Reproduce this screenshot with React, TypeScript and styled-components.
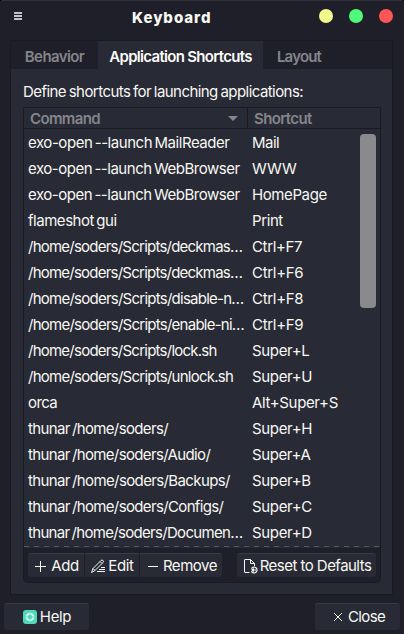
import React from "react";
import styled, { createGlobalStyle } from "styled-components";

const Global = createGlobalStyle`
  * { box-sizing: border-box; }
  html, body { margin: 0; background: #000; overflow: hidden; }
  body { font-family: Inter, "Liberation Sans", sans-serif; font-size: 15px; letter-spacing: -0.35px; color: #f8f8f2; }
`;

const Window = styled.div`
  width: 404px; height: 634px; display: flex; flex-direction: column;
  background: #1e1f29; border-top: 1px solid #30313a; border-radius: 3px 3px 0 0;
`;
const TitleBar = styled.header`
  height: 39px; flex: none; display: grid; grid-template-columns: 120px 1fr 120px;
  padding-bottom: 6px; align-items: center;
`;
const MenuIcon = styled.div`
  width: 8px; height: 8px; margin: -3px 0 0 14px; display: flex; flex-direction: column; justify-content: space-between;
  &::before, &::after, & > i { content: ""; height: 2px; background: #c4c4c6; display: block; }
`;
const Title = styled.h1`
  margin: 0; padding-left: 12px; font-size: 15px; font-weight: 800; letter-spacing: 0.95px; line-height: 20px;
`;
const Controls = styled.div`
  display: flex; justify-content: flex-end; gap: 16px; padding-right: 11px; margin-top: -4px;
`;
const Dot = styled.span<{ $color: string }>`
  width: 14px; height: 14px; border-radius: 50%; background: ${(p) => p.$color};
`;
const Notebook = styled.main`
  width: 383px; height: 555px; margin-left: 10px; flex: none; background: #282a36;
  border: 1px solid #191a22; display: flex; flex-direction: column;
`;
const Tabs = styled.nav`
  height: 28px; flex: none; display: flex; background: #1e1f29;
`;
const Tab = styled.div<{ $active?: boolean; $width: number; $tracking: number }>`
  width: ${(p) => p.$width}px; padding-top: 2px; line-height: 28px; height: 28px; text-align: center;
  white-space: nowrap; font-weight: 600; letter-spacing: ${(p) => p.$tracking}px;
  color: ${(p) => (p.$active ? "#fcfcf8" : "#85858a")};
  background: ${(p) => (p.$active ? "#282a36" : "transparent")};
`;
const Intro = styled.p`
  margin: 13px 0 5px 12px; height: 20px; line-height: 20px; white-space: nowrap; letter-spacing: -0.56px; word-spacing: -0.9px;
`;
const Table = styled.section`
  width: 358px; height: 476px; margin-left: 12px; border: 1px solid #191a22;
  border-radius: 0 0 5px 5px; display: flex; flex-direction: column; overflow: hidden;
`;
const Head = styled.div`
  height: 21px; flex: none; display: grid; grid-template-columns: 224px 1fr;
  border-bottom: 1px solid #191a22; color: #85858a; font-weight: 600; line-height: 21px; letter-spacing: -0.63px;
`;
const HeadCell = styled.div`
  display: flex; justify-content: space-between; align-items: center; padding: 0 9px 0 6px;
  border-right: 1px solid #191a22;
  &:last-child { border-right: 0; }
`;
const Body = styled.div`
  display: flex; flex: none; height: 417px; padding-top: 1px;
`;
const Rows = styled.div`width: 334px;`;
const Row = styled.div`
  height: 26px; line-height: 26px; display: grid; grid-template-columns: 224px 1fr; white-space: nowrap;
`;
const Cell = styled.span<{ $tracking?: number }>`
  padding: 0 0 0 4px; letter-spacing: ${(p) => p.$tracking ?? -0.35}px; word-spacing: -1.4px;
`;
const Scrollbar = styled.div`
  width: 16px; height: 174px; margin: 4px 0 0 2px; border-radius: 4px; background: #89898e;
`;
const Dashes = styled.div`
  height: 1px; flex: none;
  background: repeating-linear-gradient(90deg, #55565f 0 5px, transparent 5px 10px);
`;
const Toolbar = styled.div`
  flex: 1; display: flex; padding: 5px 4px 0; background: #1e1f29; border-top: 1px solid #282a36;
`;
const Button = styled.button<{ $width: number; $height?: number; $tracking?: number }>`
  width: ${(p) => p.$width}px; height: ${(p) => p.$height ?? 24}px; padding: 0; border: 0;
  border-top: 1px solid #393b45; border-radius: 3px; background: #282a36;
  color: #f8f8f2; font: inherit; line-height: 20px; letter-spacing: ${(p) => p.$tracking ?? -0.35}px;
  display: flex; align-items: center; justify-content: center; gap: 2px; white-space: nowrap;
  svg { flex: none; }
`;
const Group = styled.div`
  display: flex; gap: 1px;
  ${Button}:first-child { border-radius: 3px 0 0 3px; }
  ${Button}:nth-child(2) { border-radius: 0; }
  ${Button}:last-child { border-radius: 0 3px 3px 0; }
`;
const ResetSlot = styled.div`margin-left: 15px;`;
const Footer = styled.footer`
  display: flex; justify-content: space-between; padding: 8px 4px 0;
`;

const Icon = ({ children }: { children: React.ReactNode }) => (
  <svg width="16" height="16" viewBox="0 0 16 16" fill="none" stroke="#f8f8f2" strokeWidth="1">{children}</svg>
);

const rows: [string, number, string, number][] = [
  ["exo-open --launch MailReader", -0.45, "Mail", -0.5],
  ["exo-open --launch WebBrowser", -0.48, "WWW", -0.2],
  ["exo-open --launch WebBrowser", -0.48, "HomePage", -0.4],
  ["flameshot gui", -0.47, "Print", -0.4],
  ["/home/soders/Scripts/deckmas…", -0.77, "Ctrl+F7", -0.35],
  ["/home/soders/Scripts/deckmas…", -0.77, "Ctrl+F6", -0.3],
  ["/home/soders/Scripts/disable-n…", -0.75, "Ctrl+F8", -0.3],
  ["/home/soders/Scripts/enable-ni…", -0.75, "Ctrl+F9", -0.3],
  ["/home/soders/Scripts/lock.sh", -0.76, "Super+L", -0.35],
  ["/home/soders/Scripts/unlock.sh", -0.75, "Super+U", -0.35],
  ["orca", -0.6, "Alt+Super+S", -0.35],
  ["thunar /home/soders/", -0.64, "Super+H", -0.35],
  ["thunar /home/soders/Audio/", -0.64, "Super+A", -0.4],
  ["thunar /home/soders/Backups/", -0.62, "Super+B", -0.35],
  ["thunar /home/soders/Configs/", -0.64, "Super+C", -0.35],
  ["thunar /home/soders/Documen…", -0.69, "Super+D", -0.35],
];

export default function App() {
  return (
    <Window>
      <Global />
      <TitleBar>
        <MenuIcon><i /></MenuIcon>
        <Title>Keyboard</Title>
        <Controls><Dot $color="#f1fa8c" /><Dot $color="#50fa7b" /><Dot $color="#ff5555" /></Controls>
      </TitleBar>
      <Notebook>
        <Tabs>
          <Tab $width={87} $tracking={-0.6}>Behavior</Tab>
          <Tab $width={165} $tracking={-0.7} $active>Application Shortcuts</Tab>
          <Tab $width={72} $tracking={-0.8}>Layout</Tab>
        </Tabs>
        <Intro>Define shortcuts for launching applications:</Intro>
        <Table>
          <Head>
            <HeadCell>Command
              <svg width="10" height="5" viewBox="0 0 10 5"><path d="M0 0H10L5 5Z" fill="#85858a" /></svg>
            </HeadCell>
            <HeadCell>Shortcut</HeadCell>
          </Head>
          <Body>
            <Rows>
              {rows.map(([command, commandTracking, shortcut, shortcutTracking], i) => (
                <Row key={i}>
                  <Cell $tracking={commandTracking}>{command}</Cell>
                  <Cell $tracking={shortcutTracking}>{shortcut}</Cell>
                </Row>
              ))}
            </Rows>
            <Scrollbar />
          </Body>
          <Dashes />
          <Toolbar>
            <Group>
              <Button $width={56}><Icon><path d="M7.5 3v11M2 8.5h11" /></Icon>Add</Button>
              <Button $width={54}>
                <Icon>
                  <path d="M1.5 14.5L3 10.5L11 2.5Q12 1.5 13 2.5Q14 3.5 13 4.5L5 12.5ZM3 10.5L5 12.5M10 3.5L12 5.5" />
                  <path d="M11 9.5h4M9 11.5h6M7 13.5h8" />
                </Icon>Edit
              </Button>
              <Button $width={82} $tracking={-0.45}><Icon><path d="M3 8.5h10" /></Icon>Remove</Button>
            </Group>
            <ResetSlot>
              <Button $width={139} $tracking={-0.53}>
                <Icon>
                  <path d="M7.5 14.5H3Q2.5 14.5 2.5 14V2Q2.5 1.5 3 1.5H8.5L12.5 5.5V8M8.5 1.5V5.5H12.5" />
                  <path d="M9.4 10.6A3 3 0 1 1 9.4 13.4" strokeWidth="1.2" />
                  <path d="M10 12h4" strokeWidth="1.2" /><path d="M9 12l3-2v4z" fill="#f8f8f2" stroke="none" />
                </Icon>Reset to Defaults
              </Button>
            </ResetSlot>
          </Toolbar>
        </Table>
      </Notebook>
      <Footer>
        <Button $width={85} $height={27}>
          <Icon>
            <rect x="1" y="1" width="14" height="14" rx="3" fill="#50d9b8" stroke="none" />
            <circle cx="8" cy="8" r="3.3" stroke="#d8fbef" strokeWidth="2" />
            <path d="M8 3.5v2.5M8 10v2.5M3.5 8h2.5M10 8h2.5" stroke="#83e8cd" strokeWidth="1.4" />
          </Icon>Help
        </Button>
        <Button $width={85} $height={27} $tracking={-0.6}><Icon><path d="M4 4l8 8M12 4l-8 8" /></Icon>Close</Button>
      </Footer>
    </Window>
  );
}
